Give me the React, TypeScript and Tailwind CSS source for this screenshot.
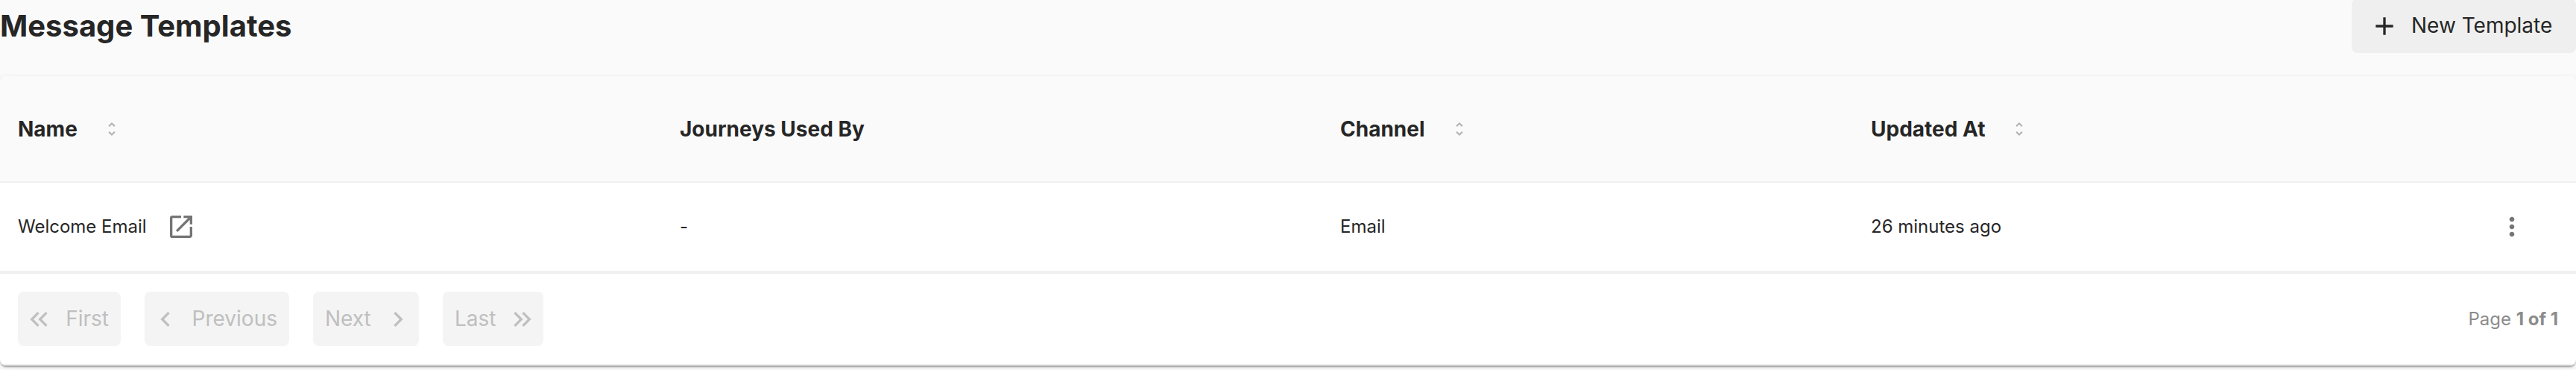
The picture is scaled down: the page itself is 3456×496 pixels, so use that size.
import type { ReactNode } from "react";
import {
  MdAdd,
  MdKeyboardArrowLeft,
  MdKeyboardArrowRight,
  MdKeyboardDoubleArrowLeft,
  MdKeyboardDoubleArrowRight,
  MdMoreVert,
  MdOpenInNew,
  MdUnfoldMore,
} from "react-icons/md";

function HeaderCell({ label, sortable }: { label: string; sortable?: boolean }) {
  return (
    <div className="flex items-center pl-6 text-[28px] font-bold">
      <span>{label}</span>
      {sortable && <MdUnfoldMore className="ml-[34px] size-6 text-[#b0b0b0]" />}
    </div>
  );
}

function PageButton({ className, children }: { className: string; children: ReactNode }) {
  return (
    <button
      disabled
      className={`flex h-[73px] items-center justify-between rounded-lg bg-[#f4f4f4] text-[28px] text-[#bfbfbf] ${className}`}
    >
      {children}
    </button>
  );
}

const columns = "grid grid-cols-[888px_886px_712px_1fr_172px]";

export default function App() {
  return (
    <div className="flow-root h-[496px] overflow-hidden bg-[#fafafa] font-['Inter',sans-serif] text-[#262626]">
      <div className="flex h-[102px] items-start justify-between">
        <h1 className="text-[40px] leading-[69px] font-bold">Message Templates</h1>
        <button className="-mt-0.5 flex h-[73px] w-[301px] items-center rounded-lg bg-[#efefef] pl-6 text-[28px]">
          <MdAdd className="size-10" />
          <span className="ml-4 pb-px whitespace-nowrap">New Template</span>
        </button>
      </div>

      <div className="h-[388px] overflow-hidden rounded-lg bg-white shadow-[0_4px_2px_-2px_rgba(0,0,0,0.2),0_2px_2px_0_rgba(0,0,0,0.14),0_2px_6px_0_rgba(0,0,0,0.12)]">
        <div className={`${columns} h-[143px] border-b-2 border-[#f0f0f0] bg-[#fafafa]`}>
          <HeaderCell label="Name" sortable />
          <HeaderCell label="Journeys Used By" />
          <HeaderCell label="Channel" sortable />
          <HeaderCell label="Updated At" sortable />
        </div>
        <div className={`${columns} h-[122px] items-center border-b-4 border-[#f0f0f0] text-[24px]`}>
          <div className="flex items-center pl-6">
            <span className="pb-px">Welcome Email</span>
            <MdOpenInNew className="ml-[26px] size-10 text-[#757575]" />
          </div>
          <div className="pb-px pl-6">-</div>
          <div className="pb-px pl-6">Email</div>
          <div className="pb-px pl-6">26 minutes ago</div>
          <div className="flex justify-center">
            <MdMoreVert className="size-10 text-[#757575]" />
          </div>
        </div>
        <div className="flex h-[123px] items-center justify-between border-b-2 border-[#f0f0f0] px-6">
          <div className="flex gap-8">
            <PageButton className="w-[138px] pr-4 pl-2">
              <MdKeyboardDoubleArrowLeft className="size-10" />
              <span className="pb-px">First</span>
            </PageButton>
            <PageButton className="w-[194px] pr-4 pl-2">
              <MdKeyboardArrowLeft className="size-10" />
              <span className="pb-px">Previous</span>
            </PageButton>
            <PageButton className="w-[142px] pr-2 pl-4">
              <span className="pb-px">Next</span>
              <MdKeyboardArrowRight className="size-10" />
            </PageButton>
            <PageButton className="w-[135px] pr-2 pl-4">
              <span className="pb-px">Last</span>
              <MdKeyboardDoubleArrowRight className="size-10" />
            </PageButton>
          </div>
          <p className="text-[24px] text-[#8c8c8c]">
            Page <strong className="font-bold">1 of 1</strong>
          </p>
        </div>
      </div>
    </div>
  );
}
